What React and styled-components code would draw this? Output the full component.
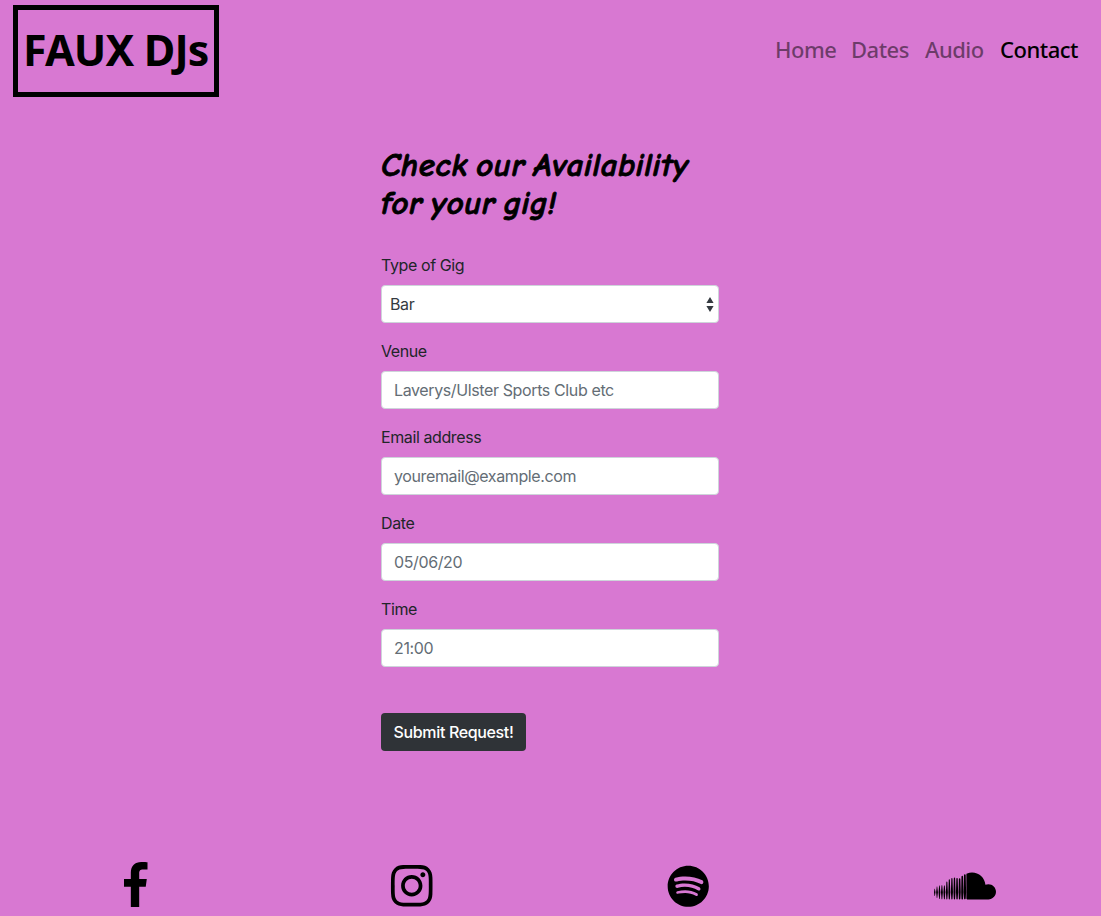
import React from "react";
import styled, { createGlobalStyle } from "styled-components";
import { FaInstagram, FaSpotify, FaSoundcloud } from "react-icons/fa";

const GlobalStyle = createGlobalStyle`
  *, *::before, *::after { box-sizing: border-box; }
  body {
    margin: 0;
    background: #d878d2;
    color: #212529;
    font: 400 16px/24px Inter, "Liberation Sans", sans-serif;
    overflow: hidden;
  }
`;

const Page = styled.div`
  height: 916px;
  display: flex;
  flex-direction: column;
`;

const Header = styled.header`
  display: flex;
  align-items: center;
  justify-content: space-between;
  padding: 5px 22px 0 13px;
`;

const Logo = styled.a`
  width: 206px;
  height: 92px;
  padding: 0 0 3px 5px;
  border: 5px solid #000;
  display: flex;
  align-items: center;
  color: #000;
  font: 700 43px/60px "Noto Sans", sans-serif;
  letter-spacing: -0.85px;
  white-space: nowrap;
`;

const Nav = styled.nav`
  display: flex;
  gap: 16px;
  padding-bottom: 4px;
`;

const NavLink = styled.a`
  color: ${(p) => (p.$active ? "#000" : "rgba(0, 0, 0, 0.5)")};
  font: 500 22px/32px "Noto Sans", sans-serif;
  width: ${(p) => p.$width}px;
  letter-spacing: -0.5px;
  white-space: nowrap;
`;

const Form = styled.form`
  width: 338px;
  margin: 49px 0 0 381px;
  display: flex;
  flex-direction: column;
`;

const Title = styled.h1`
  margin: 0 0 31px;
  color: #000;
  font: italic 700 33px/38px "Comic Neue", "Noto Sans", cursive;
  letter-spacing: 0.5px;
  word-spacing: -4px;
  -webkit-text-stroke: 0.8px #000;
  white-space: nowrap;
`;

const Field = styled.div`
  display: flex;
  flex-direction: column;
  gap: 8px;
  margin-bottom: 16px;
`;

const Label = styled.label`
  height: 24px;
  letter-spacing: -0.4px;
`;

const Control = styled.div`
  height: 38px;
  display: flex;
  align-items: center;
  justify-content: space-between;
  padding: ${(p) => (p.$select ? "0 4px 0 8px" : "0 12px")};
  border: 1px solid #ced4da;
  border-radius: 4px;
  background: #fff;
  color: ${(p) => (p.$select ? "#343a40" : "#646d75")};
  letter-spacing: -0.38px;
`;

const Submit = styled.button`
  align-self: flex-start;
  width: 145px;
  height: 38px;
  margin-top: 30px;
  padding: 0;
  border: 0;
  border-radius: 4px;
  background: #2f3337;
  color: #fff;
  font: 500 16px/24px Inter, sans-serif;
  letter-spacing: -0.36px;
`;

const Footer = styled.footer`
  margin-top: auto;
  height: 64px;
  display: grid;
  grid-template-columns: 272px 280px 272px 277px;
  grid-template-rows: 64px;
  color: #000;
`;

const Social = styled.a`
  display: flex;
  align-items: center;
  justify-content: center;
  min-height: 0;
  padding-left: ${(p) => p.$indent || 0}px;
  padding-top: ${(p) => p.$drop || 0}px;

  svg { display: block; flex: none; }
`;

const Arrows = () => (
  <svg width="8" height="15" viewBox="0 0 8 15" fill="#343a40">
    <path d="M4 0 7.6 6H.4zM4 15 .4 9h7.2z" />
  </svg>
);

const FacebookIcon = () => (
  <svg width="23.5" height="45" viewBox="0 0 264 512" fill="currentColor" preserveAspectRatio="none">
    <path d="M76.7 512V283H0v-91h76.7v-71.7C76.7 42.4 124.3 0 193.8 0c33.3 0 61.9 2.5 70.2 3.6V85h-48.2c-37.8 0-45.1 18-45.1 44.3V192H256l-11.7 91h-73.6v229" />
  </svg>
);

const fields = [
  ["Venue", "Laverys/Ulster Sports Club etc"],
  ["Email address", "youremail@example.com"],
  ["Date", "05/06/20"],
  ["Time", "21:00"],
];

export default function App() {
  return (
    <Page>
      <GlobalStyle />
      <Header>
        <Logo>FAUX DJs</Logo>
        <Nav>
          <NavLink $width={60}>Home</NavLink>
          <NavLink $width={58}>Dates</NavLink>
          <NavLink $width={59}>Audio</NavLink>
          <NavLink $width={79} $active>Contact</NavLink>
        </Nav>
      </Header>
      <Form>
        <Title>Check our Availability<br />for your gig!</Title>
        <Field>
          <Label>Type of Gig</Label>
          <Control $select>
            <span>Bar</span>
            <Arrows />
          </Control>
        </Field>
        {fields.map(([label, hint]) => (
          <Field key={label}>
            <Label>{label}</Label>
            <Control>{hint}</Control>
          </Field>
        ))}
        <Submit type="button">Submit Request!</Submit>
      </Form>
      <Footer>
        <Social $drop={1}><FacebookIcon /></Social>
        <Social $drop={4}><FaInstagram size={47.5} /></Social>
        <Social $drop={4}><FaSpotify size={42.5} /></Social>
        <Social $drop={4} $indent={5}><FaSoundcloud size={62} /></Social>
      </Footer>
    </Page>
  );
}
